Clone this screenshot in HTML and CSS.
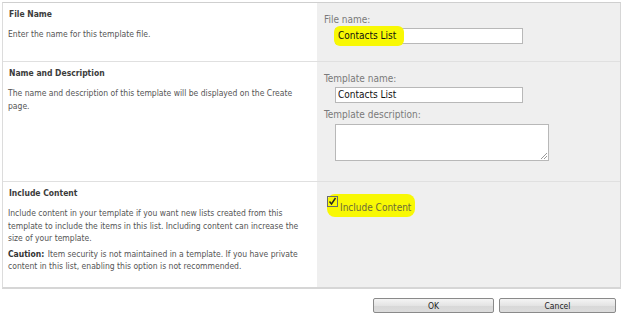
FILE: index.html
```html
<!DOCTYPE html>
<html>
<head>
<meta charset="utf-8">
<link rel="stylesheet" href="styles.css">
</head>
<body>
<div class="form">
  <div class="row row-file">
    <div class="desc">
      <h3 class="title">File Name</h3>
      <p class="text">Enter the name for this template file.</p>
    </div>
    <div class="ctrl">
      <div class="label">File name:</div>
      <div class="field">
        <span class="value">Contacts List</span>
        <span class="marker marker-input"></span>
      </div>
    </div>
  </div>
  <div class="row row-name">
    <div class="desc">
      <h3 class="title">Name and Description</h3>
      <p class="text">The name and description of this template will be displayed on the Create page.</p>
    </div>
    <div class="ctrl">
      <div class="label">Template name:</div>
      <div class="field"><span class="value">Contacts List</span></div>
      <div class="label label-gap">Template description:</div>
      <div class="area">
        <svg class="grip" width="6" height="6" viewBox="0 0 6 6"><path d="M6 0 L0 6 M6 3 L3 6" stroke="#9a9a9a" stroke-width="1" fill="none"/></svg>
      </div>
    </div>
  </div>
  <div class="row row-content">
    <div class="desc">
      <h3 class="title">Include Content</h3>
      <p class="text">Include content in your template if you want new lists created from this template to include the items in this list. Including content can increase the size of your template.</p>
      <p class="text text-gap"><b class="strong">Caution:</b> Item security is not maintained in a template. If you have private content in this list, enabling this option is not recommended.</p>
    </div>
    <div class="ctrl">
      <label class="check">
        <span class="marker marker-check"></span>
        <span class="box">
          <svg width="9" height="9" viewBox="0 0 9 9"><path d="M1.5 4.5 L3.5 7 L7.5 1" stroke="#222" stroke-width="1.4" fill="none"/></svg>
        </span>
        <span class="check-text">Include Content</span>
      </label>
    </div>
  </div>
</div>
<div class="buttons">
  <button class="btn btn-ok">OK</button>
  <button class="btn btn-cancel">Cancel</button>
</div>
</body>
</html>
```

FILE: styles.css
```css
html, body {
  margin: 0;
  padding: 0;
  background: #ffffff;
}
body {
  font-family: "DejaVu Sans Condensed", "DejaVu Sans", sans-serif;
  font-size: 8.5px;
  color: #4c4c4c;
  width: 624px;
  height: 323px;
  overflow: hidden;
}
.form {
  margin: 2px 3px 0 2px;
  border-top: 1px solid #cfcfcf;
  border-left: 1px solid #dcdcdc;
  border-right: 1px solid #d6d6d6;
  border-bottom: 2px solid #d6d6d6;
}
.row {
  display: grid;
  grid-template-columns: 314px 1fr;
}
.row + .row {
  border-top: 1px solid #e0e0e0;
}
.row-file { height: 58px; }
.row-name { height: 119px; }
.row-content { height: 105px; }
.desc {
  padding: 5px 6px 0 5px;
  background: #ffffff;
}
.title {
  margin: 0;
  font-size: 8.5px;
  font-weight: bold;
  color: #3b3b3b;
  line-height: 12px;
  padding-left: 1px;
}
.text {
  margin: 8px 0 0 0;
  line-height: 12.5px;
  color: #555555;
}
.text-gap { margin-top: 3px; }
.strong { color: #333333; margin-right: 1px; }
.ctrl {
  background: #efefef;
  padding: 11px 0 0 7px;
}
.label {
  color: #7a7a7a;
  font-size: 10px;
  line-height: 12px;
}
.label-gap { margin-top: 6px; }
.field {
  position: relative;
  margin: 2px 0 0 11px;
  width: 184px;
  height: 14px;
  border: 1px solid #b8b8b8;
  background: #ffffff;
  line-height: 14px;
  padding-left: 2px;
  box-sizing: content-box;
}
.value {
  position: relative;
  z-index: 2;
  color: #111111;
  font-size: 10px;
}
.area {
  position: relative;
  margin: 3px 0 0 11px;
  width: 212px;
  height: 35px;
  border: 1px solid #b8b8b8;
  background: #ffffff;
}
.grip {
  position: absolute;
  right: 1px;
  bottom: 1px;
}
.marker {
  position: absolute;
  background: #f8f804;
  border-radius: 6px;
  z-index: 1;
}
.marker-input {
  left: -2px;
  top: -3px;
  width: 70px;
  height: 20px;
}
.row-content .ctrl { padding: 13px 0 0 10px; }
.check {
  position: relative;
  display: flex;
  align-items: flex-start;
  width: 90px;
}
.marker-check {
  left: 0;
  top: -1px;
  width: 88px;
  height: 23px;
  border-radius: 8px;
}
.box {
  position: relative;
  z-index: 2;
  width: 9px;
  height: 9px;
  border: 1px solid #6b6b6b;
  background: transparent;
  margin-top: 1px;
}
.box svg { display: block; }
.check-text {
  position: relative;
  z-index: 2;
  color: #6a6a3a;
  font-size: 10px;
  margin: 7px 0 0 2px;
}
.buttons {
  display: flex;
  justify-content: flex-end;
  gap: 5px;
  padding: 9px 8px 0 0;
}
.btn {
  font-family: "DejaVu Sans Condensed", "DejaVu Sans", sans-serif;
  font-size: 8.5px;
  color: #222222;
  height: 15px;
  padding: 0;
  border: 1px solid #8a8a8a;
  border-radius: 2px;
  background: linear-gradient(#f4f4f4, #e4e4e4 50%, #d8d8d8 51%, #dcdcdc);
}
.btn-ok { width: 121px; }
.btn-cancel { width: 117px; }
```
